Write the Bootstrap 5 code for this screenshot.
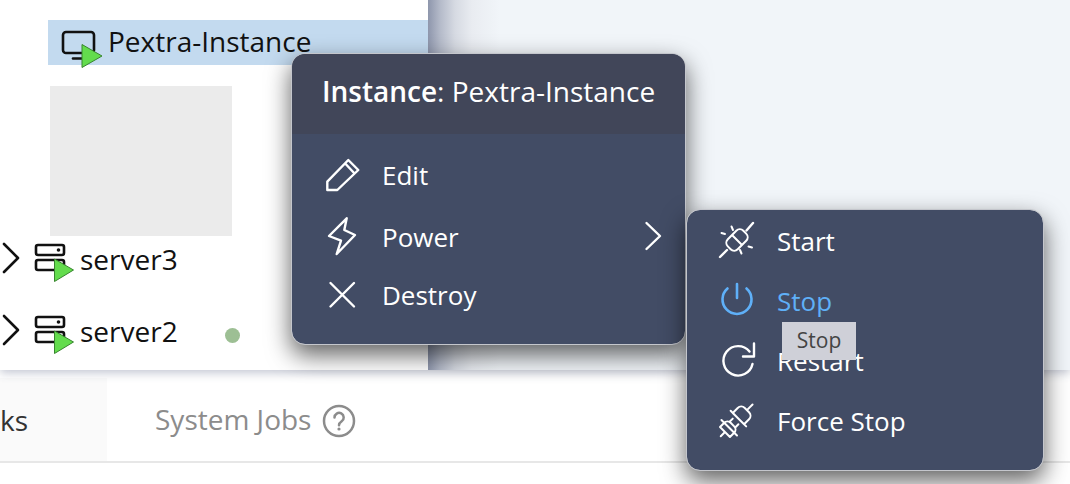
<!DOCTYPE html>
<html lang="en">
<head>
    <meta charset="UTF-8">
    <meta name="viewport" content="width=device-width, initial-scale=1.0">
    <title>Pextra Instance Menu</title>
    <link href="https://cdn.jsdelivr.net/npm/bootstrap@5.3.0/dist/css/bootstrap.min.css" rel="stylesheet">
    <style>
        html, body {
            height: 484px;
            overflow: hidden;
        }
        body {
            position: relative;
            width: 1070px;
            font-family: "Open Sans", "Noto Sans", sans-serif;
            background-color: #fff;
        }
        svg { display: block; flex: none; overflow: visible; }
        .top-area {
            height: 370px;
            background: linear-gradient(90deg, #8e96ac 428px, #b4bac9 440px, #d6dae2 455px, #e9ecf1 472px, #f1f5f9 500px);
            box-shadow: 0 3px 9px rgba(60, 70, 110, .3);
            position: relative;
        }
        .side-tree {
            width: 428px;
            height: 370px;
            background-color: #fff;
            padding-top: 20px;
        }
        .tree-sel {
            height: 45px;
            margin-left: 48px;
            padding-left: 13px;
            background-color: #c3daef;
        }
        .tree-row-text {
            font-size: 28px;
            line-height: 42px;
            color: #111;
        }
        .tree-sel .tree-row-text { margin-left: 5px; }
        .server-row .tree-row-text { margin-top: -3px; }
        .thumb-box {
            width: 182px;
            height: 150px;
            margin: 21px 0 0 50px;
            background-color: #ebebeb;
        }
        .server-row {
            height: 72px;
            padding-left: 4px;
            padding-top: 5px;
        }
        .status-dot {
            width: 15px;
            height: 15px;
            background-color: #9dbf94;
            margin-left: 47px;
            margin-top: 15px;
        }
        .tab-strip {
            margin-top: 8px;
            height: 85px;
            border-bottom: 2px solid #e7e7e7;
        }
        .tab-cur {
            width: 107px;
            font-size: 28px;
            color: #333;
            background-color: #fafafa;
        }
        .tab-other {
            margin-left: 48px;
            font-size: 28px;
            color: #8c8c8c;
        }
        .tab-other span { margin-top: -2px; }
        .help-ic { margin-left: 11px; }
        .ctx-menu.dropdown-menu {
            position: absolute;
            display: block;
            padding: 0;
            color: #fff;
            background-color: #424c65;
            border: 1px solid #c4c6cc;
            border-radius: 14px;
            overflow: hidden;
            box-shadow: 0 10px 24px rgba(0, 0, 0, .62);
        }
        .menu-main {
            left: 291px;
            top: 53px;
            width: 395px;
            height: 292px;
        }
        .menu-power {
            left: 686px;
            top: 209px;
            width: 358px;
            height: 262px;
            padding-top: 3px;
        }
        .ctx-menu .dropdown-header {
            height: 80px;
            padding: 19px 0 0 30px;
            font-size: 28px;
            line-height: 36px;
            color: #fff;
            background-color: #414659;
        }
        .ctx-menu .dropdown-header b { font-weight: 600; }
        .ctx-menu .dropdown-item {
            display: flex;
            align-items: center;
            color: #fff;
            font-size: 26px;
            background: none;
            padding: 0;
        }
        .menu-main .dropdown-item { height: 60px; padding-left: 31px; }
        .menu-main .first-item { margin-top: 11px; height: 61px; }
        .menu-main .last-item { height: 57px; }
        .menu-power .dropdown-item { height: 60px; padding-left: 30px; }
        .item-label { margin-left: 19px; margin-top: 3px; }
        .first-item .item-label { margin-top: 0; }
        .last-item .item-label { margin-top: 1px; }
        .menu-power .item-label { margin-left: 20px; margin-top: 2px; }
        .ctx-menu .dropdown-item.is-hover { color: #5fb0f8; }
        .tip-box {
            position: absolute;
            z-index: 1010;
            left: 782px;
            top: 322px;
            width: 74px;
            height: 38px;
            background-color: #cfd0d8;
            color: #444;
            font-size: 21px;
            line-height: 36px;
            text-align: center;
        }
        .ic-line { fill: none; stroke: #fff; stroke-width: 2.4; stroke-linecap: round; stroke-linejoin: round; }
        .ic-thin { fill: none; stroke: #fff; stroke-width: 2; stroke-linecap: round; stroke-linejoin: round; }
        .ic-blk { fill: none; stroke: #111; stroke-width: 2.6; stroke-linecap: round; stroke-linejoin: round; }
        .ic-play { fill: #63dc4d; stroke: #38852f; stroke-width: 1; stroke-linejoin: round; }
    </style>
</head>
<body>
    <div class="top-area">
        <div class="side-tree">
            <div class="tree-sel d-flex">
                <svg width="42" height="48" viewBox="0 0 42 48">
                    <rect class="ic-blk" x="2" y="12" width="31" height="21" rx="3"/>
                    <path class="ic-blk" d="M12 38.500H25"/>
                    <path class="ic-play" d="M21 24.500 41 36 21 47.500Z"/>
                </svg>
                <span class="tree-row-text">Pextra-Instance</span>
            </div>
            <div class="thumb-box"></div>
            <div class="server-row d-flex">
                <svg width="76" height="48" viewBox="0 0 76 48">
                    <path class="ic-blk" d="M0 3 14 17 0 31"/>
                    <rect class="ic-blk" x="32" y="4" width="28" height="10" rx="2"/>
                    <rect class="ic-blk" x="32" y="19" width="28" height="10" rx="2"/>
                    <circle cx="54.500" cy="9" r="1.800" fill="#111"/>
                    <path class="ic-play" d="M50.500 18 69.500 29 50.500 40.500Z"/>
                </svg>
                <span class="tree-row-text">server3</span>
            </div>
            <div class="server-row d-flex">
                <svg width="76" height="48" viewBox="0 0 76 48">
                    <path class="ic-blk" d="M0 3 14 17 0 31"/>
                    <rect class="ic-blk" x="32" y="4" width="28" height="10" rx="2"/>
                    <rect class="ic-blk" x="32" y="19" width="28" height="10" rx="2"/>
                    <circle cx="54.500" cy="9" r="1.800" fill="#111"/>
                    <path class="ic-play" d="M50.500 18 69.500 29 50.500 40.500Z"/>
                </svg>
                <span class="tree-row-text">server2</span>
                <span class="status-dot rounded-circle"></span>
            </div>
        </div>
    </div>

    <div class="tab-strip d-flex align-items-center">
        <div class="tab-cur h-100 d-flex align-items-center">
            <span>ks</span>
        </div>
        <div class="tab-other d-flex align-items-center">
            <span>System Jobs</span>
            <svg class="help-ic" width="34" height="34" viewBox="0 0 34 34">
                <circle cx="17" cy="18" r="15" fill="none" stroke="#8c8c8c" stroke-width="2.500"/>
                <path d="M12.500 14.500a4.600 4.600 0 1 1 7.200 3.800c-1.800 1.200-2.700 2-2.700 4" fill="none" stroke="#8c8c8c" stroke-width="2.500" stroke-linecap="round"/>
                <circle cx="17" cy="26" r="1.600" fill="#8c8c8c"/>
            </svg>
        </div>
    </div>

    <div class="ctx-menu dropdown-menu menu-main">
        <div class="dropdown-header"><b>Instance</b>: Pextra-Instance</div>
        <a class="dropdown-item first-item" href="#">
            <svg width="40" height="40" viewBox="0 0 40 40">
                <path class="ic-line" d="M4.300 25.700 25.300 4 35.300 14 14.300 34H4.300ZM22 7.300 31.300 17.300"/>
            </svg>
            <span class="item-label">Edit</span>
        </a>
        <a class="dropdown-item" href="#">
            <svg width="40" height="40" viewBox="0 0 40 40">
                <path class="ic-line" d="M23.700 2.300 6 20 18 24.700 13.700 38 32 19 21.300 14Z"/>
            </svg>
            <span class="item-label">Power</span>
            <svg class="ms-auto me-4" width="16" height="28" viewBox="0 0 16 28">
                <path class="ic-line" d="M1.500 1 15 14 1.500 27"/>
            </svg>
        </a>
        <a class="dropdown-item last-item" href="#">
            <svg width="40" height="40" viewBox="0 0 40 40">
                <path class="ic-line" d="M7.500 8 31 31.500M31 8 7.500 31.500"/>
            </svg>
            <span class="item-label">Destroy</span>
        </a>
    </div>

    <div class="ctx-menu dropdown-menu menu-power">
        <a class="dropdown-item" href="#">
            <svg width="40" height="40" viewBox="0 0 40 40">
                <path class="ic-line" d="M3 37 10 30M29.500 10.500 36 3"/>
                <rect class="ic-thin" x="9" y="13" width="22" height="14" rx="5" transform="rotate(-45 20 20)"/>
                <path class="ic-thin" d="M15.500 15.500 24.500 24.500M14.500 6.500 16 10M4.500 13 8 14M31.500 26.500 35 27.500M23 30 24.500 33.500"/>
            </svg>
            <span class="item-label">Start</span>
        </a>
        <a class="dropdown-item is-hover" href="#">
            <svg width="40" height="40" viewBox="0 0 40 40">
                <path d="M10.500 8.500a14.500 14.500 0 1 0 19 0M20 4V18" fill="none" stroke="#5fb0f8" stroke-width="2.600" stroke-linecap="round"/>
            </svg>
            <span class="item-label">Stop</span>
        </a>
        <a class="dropdown-item" href="#">
            <svg width="40" height="40" viewBox="0 0 40 40">
                <path class="ic-line" d="M35.500 24A14.700 14.700 0 1 1 32.500 11.500M37 3.500V16.500H26"/>
            </svg>
            <span class="item-label">Restart</span>
        </a>
        <a class="dropdown-item" href="#">
            <svg width="40" height="40" viewBox="0 0 40 40">
                <g transform="rotate(-45 20 20)">
                    <path class="ic-thin" d="M-3 20H3M3 13H9a4.500 4.500 0 0 1 4.500 4.500v5A4.500 4.500 0 0 1 9 27H3ZM13.500 16H18M13.500 24H18M9 9V31"/>
                    <path class="ic-thin" d="M22 12H29a5 5 0 0 1 5 5v6a5 5 0 0 1-5 5H22ZM34 20H42M22 9V31"/>
                </g>
            </svg>
            <span class="item-label">Force Stop</span>
        </a>
    </div>

    <div class="tip-box">Stop</div>

    <script src="https://cdn.jsdelivr.net/npm/bootstrap@5.3.0/dist/js/bootstrap.bundle.min.js"></script>
</body>
</html>
